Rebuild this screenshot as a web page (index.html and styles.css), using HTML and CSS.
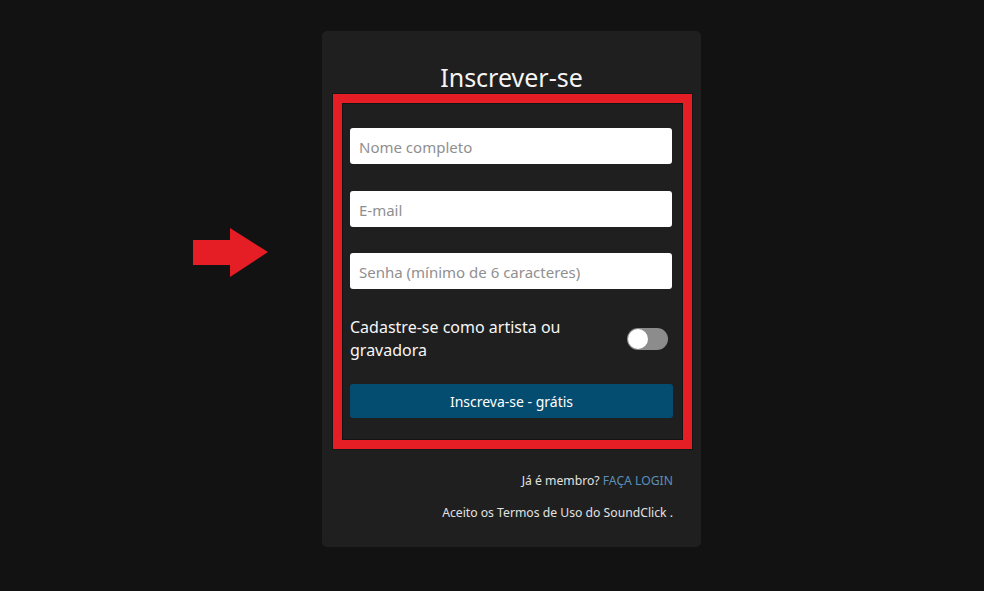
FILE: index.html
```
<!DOCTYPE html>
<html lang="pt">
<head>
<meta charset="utf-8">
<title>Inscrever-se</title>
<link rel="stylesheet" href="styles.css">
</head>
<body>
<div class="page">
  <div class="arrow">
    <svg width="76" height="50" viewBox="0 0 76 50"><polygon points="0,12 37,12 37,0 75,24 37,49 37,37 0,37" fill="#e51e25"/></svg>
  </div>
  <div class="card">
    <h1 class="title">Inscrever-se</h1>
    <div class="highlight">
      <form class="form">
        <input class="field" type="text" placeholder="Nome completo">
        <input class="field" type="email" placeholder="E-mail">
        <input class="field" type="password" placeholder="Senha (mínimo de 6 caracteres)">
        <div class="toggle-row">
          <span class="toggle-label">Cadastre-se como artista ou gravadora</span>
          <span class="toggle"><span class="knob"></span></span>
        </div>
        <button class="submit" type="button">Inscreva-se - grátis</button>
      </form>
    </div>
    <p class="member">Já é membro? <a class="link" href="#">FAÇA LOGIN</a></p>
    <p class="terms">Aceito os Termos de Uso do SoundClick .</p>
  </div>
</div>
</body>
</html>
```
FILE: styles.css
```
* { box-sizing: border-box; }
html, body { margin: 0; padding: 0; }
body {
  background: #121212;
  font-family: "Noto Sans", "Open Sans", sans-serif;
  color: #fff;
  width: 984px;
  height: 591px;
  overflow: hidden;
}
.page {
  display: flex;
  align-items: flex-start;
  padding: 31px 0 0 193px;
}
.arrow {
  width: 76px;
  height: 50px;
  margin-top: 197px;
  margin-right: 53px;
}
.arrow svg { display: block; }
.card {
  width: 379px;
  height: 516px;
  background: #1f1f1f;
  border-radius: 5px;
  padding: 0 28px 0 11px;
}
.title {
  margin: 0;
  padding-top: 30px;
  height: 63px;
  font-size: 25px;
  line-height: 32px;
  font-weight: 400;
  text-align: center;
  padding-left: 17px;
  color: #f4f4f4;
}
.highlight {
  width: 359px;
  margin-right: -19px;
  border: 9px solid #e51e25;
  box-shadow: inset 0 0 0 1px #141414, 0 0 0 1px #161616;
  padding: 25px 10px 22px 8px;
}
.form {
  display: flex;
  flex-direction: column;
}
.field {
  height: 36px;
  border: none;
  border-radius: 3px;
  background: #fff;
  padding: 1px 9px 0;
  font-family: inherit;
  font-size: 15px;
  color: #333;
  margin: 0 1px 27px 0;
  outline: none;
}
.field:nth-of-type(2) { margin-bottom: 26px; }
.field:nth-of-type(3) { margin-bottom: 27px; }
.field::placeholder { color: #8f8f8f; }
.toggle-row {
  display: flex;
  align-items: center;
  justify-content: space-between;
  margin-bottom: 22px;
}
.toggle-label {
  max-width: 240px;
  font-size: 16px;
  line-height: 23px;
  color: #f6f6f6;
}
.toggle {
  position: relative;
  width: 41px;
  height: 22px;
  border-radius: 11px;
  background: #8c8c8c;
  margin-right: 5px;
}
.knob {
  position: absolute;
  left: 1px;
  top: 1px;
  width: 20px;
  height: 20px;
  border-radius: 50%;
  background: #fff;
}
.submit {
  height: 34px;
  border: none;
  border-radius: 3px;
  background: #054d70;
  color: #fff;
  font-family: inherit;
  font-size: 14px;
}
.member, .terms {
  margin: 0;
  text-align: right;
  font-size: 12.2px;
  line-height: 18px;
  color: #e2e2e2;
}
.member { margin-top: 23px; }
.terms { margin-top: 14px; }
.link { color: #5b8fb8; text-decoration: none; }
```
